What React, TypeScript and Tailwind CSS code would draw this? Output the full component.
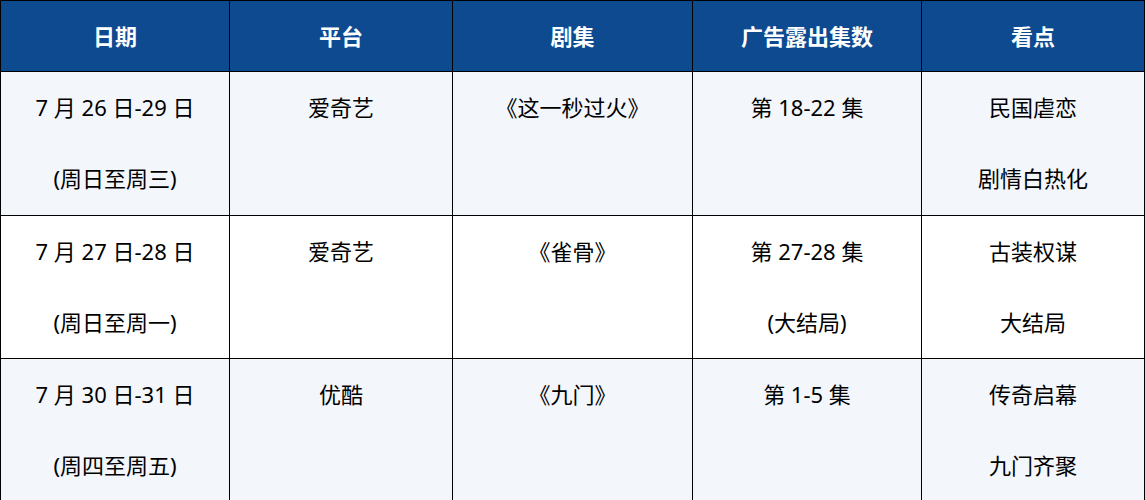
import React from "react";

const rows = [
  {
    bg: "bg-[#f3f6fb]",
    h: "h-[144px]",
    cells: [
      ["7 月 26 日-29 日", "(周日至周三)"],
      ["爱奇艺"],
      ["《这一秒过火》"],
      ["第 18-22 集"],
      ["民国虐恋", "剧情白热化"],
    ],
  },
  {
    bg: "bg-white",
    h: "h-[143px]",
    cells: [
      ["7 月 27 日-28 日", "(周日至周一)"],
      ["爱奇艺"],
      ["《雀骨》"],
      ["第 27-28 集", "(大结局)"],
      ["古装权谋", "大结局"],
    ],
  },
  {
    bg: "bg-[#f3f6fb]",
    h: "h-[143px]",
    cells: [
      ["7 月 30 日-31 日", "(周四至周五)"],
      ["优酷"],
      ["《九门》"],
      ["第 1-5 集"],
      ["传奇启幕", "九门齐聚"],
    ],
  },
];

const headers = ["日期", "平台", "剧集", "广告露出集数", "看点"];

export default function App() {
  return (
    <div
      className="w-[1145px] h-[500px] overflow-hidden bg-white"
      style={{ fontFamily: '"Noto Sans", "Noto Sans CJK SC", sans-serif' }}
    >
      <div className="grid grid-cols-[229px_223px_240px_229px_223px] border-t border-l border-black">
        {headers.map((h, i) => (
          <div
            key={i}
            className="h-[71px] flex items-center justify-center bg-[#0d4a90] text-white font-bold text-[22px] border-r border-b border-black"
          >
            {h}
          </div>
        ))}
        {rows.map((r, ri) =>
          r.cells.map((c, ci) => (
            <div
              key={`${ri}-${ci}`}
              className={`${r.bg} ${r.h} border-r border-b border-black flex flex-col text-[22px] text-black`}
            >
              {c.map((t, ti) => (
                <div key={ti} className="h-[71px] flex items-center justify-center">
                  {t}
                </div>
              ))}
            </div>
          ))
        )}
      </div>
    </div>
  );
}
